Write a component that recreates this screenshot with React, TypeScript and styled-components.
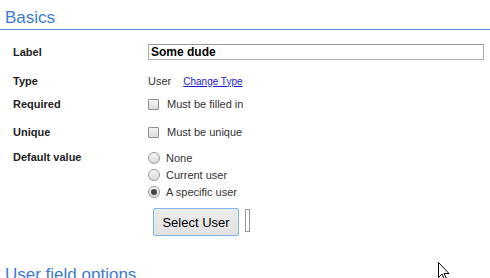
import React from 'react';
import styled, { createGlobalStyle } from 'styled-components';

const GlobalStyle = createGlobalStyle`
  html, body {
    margin: 0;
    padding: 0;
    background: #ffffff;
    overflow: hidden;
  }
  body {
    font-family: "Liberation Sans", Arial, sans-serif;
    color: #222222;
  }
`;

const Page = styled.div`
  position: relative;
  width: 490px;
  height: 278px;
  overflow: hidden;
`;

const SectionTitle = styled.h2<{ $top: number; $rule?: boolean }>`
  margin: ${({ $top }) => $top}px 0 0 0;
  padding: 0 0 1px 5px;
  font: normal 17px/20px "Liberation Sans", Arial, sans-serif;
  color: #3b7bd4;
  border-bottom: ${({ $rule }) => ($rule ? '1px solid #5d93dd' : 'none')};
`;

const Form = styled.div`
  display: flex;
  flex-direction: column;
`;

const Row = styled.div<{ $gap: number; $top?: boolean }>`
  display: flex;
  align-items: ${({ $top }) => ($top ? 'flex-start' : 'center')};
  min-height: 22px;
  margin-top: ${({ $gap }) => $gap}px;
`;

const FieldLabel = styled.div`
  width: 135px;
  padding-left: 13px;
  font: bold 11px/17px "Liberation Sans", Arial, sans-serif;
  color: #222222;
`;

const FieldValue = styled.div`
  display: flex;
  flex-direction: column;
  flex: 1;
`;

const TextInput = styled.input`
  box-sizing: border-box;
  width: 336px;
  height: 16px;
  margin: 0;
  padding: 0 2px;
  border: 1px solid #adadad;
  border-top-color: #9a9a9a;
  font: bold 12px "Liberation Sans", Arial, sans-serif;
  color: #000000;
  outline: none;
`;

const Inline = styled.div`
  display: flex;
  align-items: center;
  font-size: 11px;
  color: #333333;
`;

const TypeLink = styled.a`
  margin-left: 12px;
  font-size: 10px;
  color: #1a1acc;
  text-decoration: underline;
`;

const Option = styled.label`
  display: flex;
  align-items: center;
  height: 17px;
  font-size: 11px;
  color: #333333;
`;

const CheckBox = styled.span`
  box-sizing: border-box;
  width: 11px;
  height: 11px;
  margin-right: 8px;
  border: 1px solid #8f8f8f;
  border-radius: 1px;
  background: linear-gradient(#f4f4f4, #dcdcdc);
`;

const Radio = styled.span<{ $checked?: boolean }>`
  box-sizing: border-box;
  position: relative;
  width: 12px;
  height: 12px;
  margin-right: 6px;
  border: 1px solid #9a9a9a;
  border-radius: 50%;
  background: linear-gradient(#f6f6f6, #dadada);

  &::after {
    content: '';
    display: ${({ $checked }) => ($checked ? 'block' : 'none')};
    position: absolute;
    left: 2px;
    top: 2px;
    width: 6px;
    height: 6px;
    border-radius: 50%;
    background: #444444;
  }
`;

const Actions = styled.div`
  display: flex;
  align-items: flex-start;
  margin: 8px 0 0 5px;
`;

const Button = styled.button`
  box-sizing: border-box;
  width: 86px;
  height: 28px;
  padding: 0;
  border: 1px solid #7eb4ea;
  border-radius: 2px;
  background: linear-gradient(#ececec, #e2e2e2);
  font: 13px "Liberation Sans", Arial, sans-serif;
  color: #000000;
`;

const Slot = styled.span`
  box-sizing: border-box;
  width: 5px;
  height: 23px;
  margin: 1px 0 0 6px;
  border: 1px solid #9a9a9a;
`;

const Cursor = styled.svg`
  position: absolute;
  left: 438px;
  top: 262px;
`;

const App: React.FC = () => {
  return (
    <Page>
      <GlobalStyle />
      <SectionTitle $top={8} $rule>Basics</SectionTitle>
      <Form>
        <Row $gap={11}>
          <FieldLabel>Label</FieldLabel>
          <FieldValue>
            <TextInput defaultValue="Some dude" />
          </FieldValue>
        </Row>
        <Row $gap={7}>
          <FieldLabel>Type</FieldLabel>
          <FieldValue>
            <Inline>
              User
              <TypeLink href="#">Change Type</TypeLink>
            </Inline>
          </FieldValue>
        </Row>
        <Row $gap={1}>
          <FieldLabel>Required</FieldLabel>
          <FieldValue>
            <Option>
              <CheckBox />
              Must be filled in
            </Option>
          </FieldValue>
        </Row>
        <Row $gap={6}>
          <FieldLabel>Unique</FieldLabel>
          <FieldValue>
            <Option>
              <CheckBox />
              Must be unique
            </Option>
          </FieldValue>
        </Row>
        <Row $gap={6} $top>
          <FieldLabel>Default value</FieldLabel>
          <FieldValue>
            <Option>
              <Radio />
              None
            </Option>
            <Option>
              <Radio />
              Current user
            </Option>
            <Option>
              <Radio $checked />
              A specific user
            </Option>
            <Actions>
              <Button>Select User</Button>
              <Slot />
            </Actions>
          </FieldValue>
        </Row>
      </Form>
      <SectionTitle $top={29}>User field options</SectionTitle>
      <Cursor width="13" height="20" viewBox="0 0 13 20">
        <path d="M0.5 0.5 L0.5 15.5 L4 12 L6.5 17.5 L8.5 16.5 L6 11.5 L11 11.5 Z" fill="#ffffff" stroke="#000000" strokeWidth="1" />
      </Cursor>
    </Page>
  );
};

export default App;
